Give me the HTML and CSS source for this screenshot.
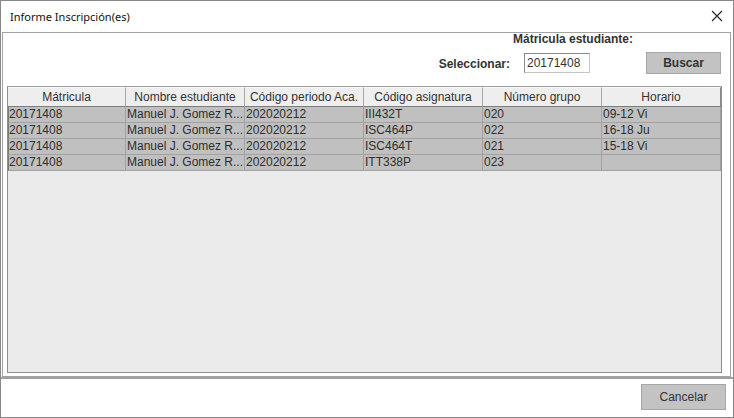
FILE: index.html
```html
<!DOCTYPE html>
<html lang="es">
<head>
<meta charset="utf-8">
<title>Informe Inscripción(es)</title>
<link rel="stylesheet" href="styles.css">
</head>
<body>
<div class="window">
  <div class="titlebar">
    <span class="title">Informe Inscripción(es)</span>
    <svg class="close" width="12" height="12" viewBox="0 0 12 12" aria-label="Cerrar">
      <path d="M1 1 L11 11 M11 1 L1 11" stroke="#222" stroke-width="1.1" fill="none"/>
    </svg>
  </div>
  <div class="content">
    <div class="form">
      <div class="form-row1"><span class="label">Mátricula estudiante:</span></div>
      <div class="form-row2">
        <span class="label">Seleccionar:</span>
        <div class="input">20171408</div>
        <button class="btn btn-search">Buscar</button>
      </div>
    </div>
    <div class="pane">
      <div class="grid">
        <div class="th">Mátricula</div>
        <div class="th">Nombre estudiante</div>
        <div class="th">Código periodo Aca.</div>
        <div class="th">Código asignatura</div>
        <div class="th">Número grupo</div>
        <div class="th">Horario</div>

        <div class="td">20171408</div>
        <div class="td">Manuel J. Gomez R...</div>
        <div class="td">202020212</div>
        <div class="td">III432T</div>
        <div class="td">020</div>
        <div class="td">09-12 Vi</div>

        <div class="td">20171408</div>
        <div class="td">Manuel J. Gomez R...</div>
        <div class="td">202020212</div>
        <div class="td">ISC464P</div>
        <div class="td">022</div>
        <div class="td">16-18 Ju</div>

        <div class="td">20171408</div>
        <div class="td">Manuel J. Gomez R...</div>
        <div class="td">202020212</div>
        <div class="td">ISC464T</div>
        <div class="td">021</div>
        <div class="td">15-18 Vi</div>

        <div class="td">20171408</div>
        <div class="td">Manuel J. Gomez R...</div>
        <div class="td">202020212</div>
        <div class="td">ITT338P</div>
        <div class="td">023</div>
        <div class="td"></div>
      </div>
    </div>
  </div>
  <div class="footer">
    <button class="btn btn-cancel">Cancelar</button>
  </div>
</div>
</body>
</html>
```

FILE: styles.css
```css
* { box-sizing: border-box; }

html, body {
  margin: 0;
  padding: 0;
  background: #ffffff;
}

body {
  font-family: "Liberation Sans", Arial, sans-serif;
  font-size: 12px;
  color: #333333;
}

.window {
  width: 734px;
  height: 418px;
  border: 1px solid #888888;
  background: #ffffff;
  display: flex;
  flex-direction: column;
}

.titlebar {
  height: 31px;
  flex: none;
  display: flex;
  align-items: center;
  justify-content: space-between;
  padding: 0 10px 0 9px;
}

.title {
  font-family: "Noto Sans", "Open Sans", sans-serif;
  font-size: 11px;
  color: #111111;
  padding-bottom: 1px;
}

.close {
  display: block;
  margin-bottom: 2px;
}

.content {
  height: 345px;
  flex: none;
  margin: 0 2px 0 1px;
  border: 1px solid #a3a3a3;
  background: #ffffff;
  display: flex;
  flex-direction: column;
}

.form {
  height: 53px;
  flex: none;
  display: flex;
  flex-direction: column;
}

.label {
  font-weight: bold;
  font-size: 12px;
  color: #333333;
}

.form-row1 {
  height: 12px;
  line-height: 12px;
  padding-left: 510px;
}

.form-row2 {
  margin-top: 7px;
  height: 22px;
  display: flex;
  align-items: center;
  justify-content: flex-end;
  padding-right: 9px;
}

.form-row2 .label {
  margin-right: 14px;
  padding-top: 1px;
}

.input {
  width: 66px;
  height: 20px;
  border: 1px solid #8a8a8a;
  border-right-color: #c4c4c4;
  border-bottom-color: #c4c4c4;
  background: #ffffff;
  padding: 0 2px;
  line-height: 18px;
  font-size: 12px;
  color: #333333;
  margin-right: 56px;
}

.btn {
  font-family: "Liberation Sans", Arial, sans-serif;
  font-size: 12px;
  color: #333333;
  background: #c3c3c3;
  border: 1px solid #a6a6a6;
  padding: 0;
  margin: 0;
}

.btn-search {
  width: 75px;
  height: 22px;
  font-weight: bold;
}

.pane {
  height: 287px;
  flex: none;
  margin: 0 8px 0 4px;
  border: 1px solid #8e8e8e;
  border-top-color: #a0a0a0;
  background: #ebebeb;
}

.grid {
  display: grid;
  grid-template-columns: 118px repeat(5, 119px);
  grid-auto-rows: 16px;
  grid-template-rows: 20px;
}

.th {
  height: 20px;
  background: #eeeeee;
  border-right: 1px solid #a8a8a8;
  border-bottom: 1px solid #7c7c7c;
  border-top: 1px solid #f7f7f7;
  text-align: center;
  line-height: 18px;
  font-size: 12px;
  color: #333333;
  white-space: nowrap;
  overflow: hidden;
}

.th:nth-child(6) {
  border-right-color: #8a8a8a;
}

.td {
  height: 16px;
  background: #c0c0c0;
  border-right: 1px solid #a2a2a2;
  border-bottom: 1px solid #a2a2a2;
  padding-left: 1px;
  line-height: 15px;
  font-size: 12px;
  color: #2e2e2e;
  white-space: nowrap;
  overflow: hidden;
}

.td:nth-child(6n+1) {
  border-left: 1px solid #7a7a7a;
  padding-left: 0;
}

.footer {
  flex: 1;
  border-top: 2px solid #a0a0a0;
  display: flex;
  justify-content: flex-end;
  align-items: flex-start;
  padding: 5px 7px 0 0;
}

.btn-cancel {
  width: 85px;
  height: 26px;
}
```
